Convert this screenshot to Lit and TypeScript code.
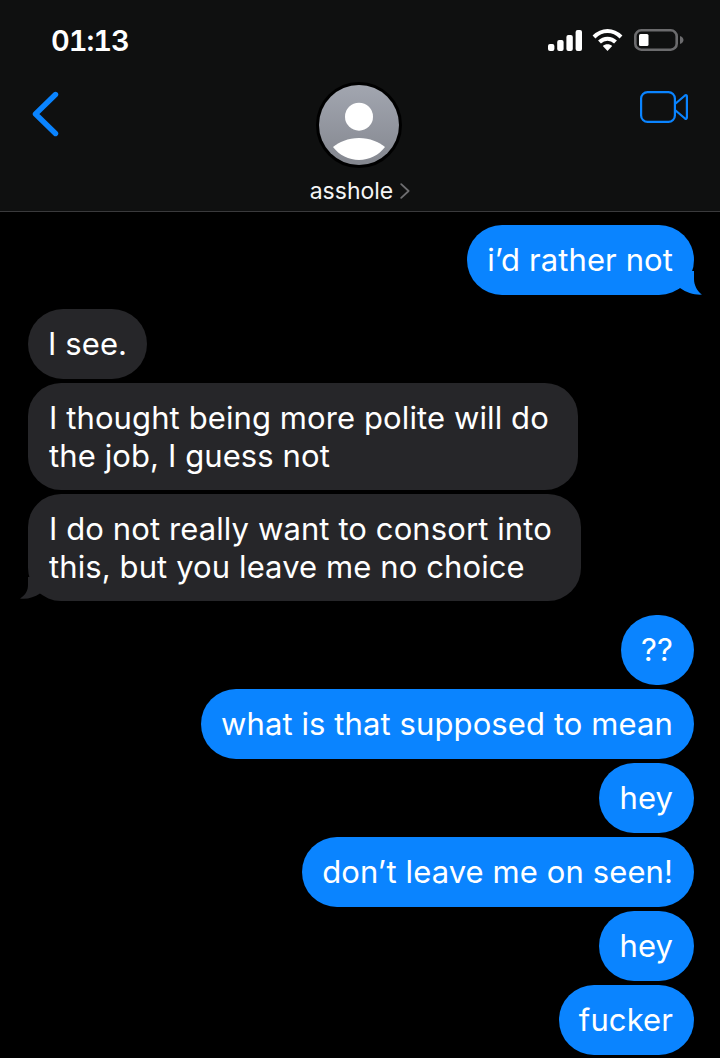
import { LitElement, html, css, svg } from "lit";
import { customElement } from "lit/decorators.js";

type Msg = { side: "in" | "out"; lines: string[]; tail?: boolean; gap: number };

const MESSAGES: Msg[] = [
  { side: "out", lines: ["i’d rather not"], tail: true, gap: 0 },
  { side: "in", lines: ["I see."], gap: 14 },
  { side: "in", lines: ["I thought being more polite will do", "the job, I guess not"], gap: 4 },
  { side: "in", lines: ["I do not really want to consort into", "this, but you leave me no choice"], tail: true, gap: 4 },
  { side: "out", lines: ["??"], gap: 14 },
  { side: "out", lines: ["what is that supposed to mean"], gap: 4 },
  { side: "out", lines: ["hey"], gap: 4 },
  { side: "out", lines: ["don’t leave me on seen!"], gap: 4 },
  { side: "out", lines: ["hey"], gap: 4 },
  { side: "out", lines: ["fucker"], gap: 4 },
];

const tailOut = svg`<svg class="tail tail-out" width="30" height="24" viewBox="0 0 30 24"><path d="M0 0H21V8C21 14 24 20 29 23.6C21 24 14 22 7 17C5 18 2 19 0 19Z" fill="#0a84ff"/></svg>`;
const tailIn = svg`<svg class="tail tail-in" width="30" height="24" viewBox="0 0 30 24"><path d="M30 0H8V8C8 13 6 18 0 21.5C7 22.5 14 20.5 20 16.5C23 18 27 19 30 19Z" fill="#262629"/></svg>`;

@customElement("app-root")
export class AppRoot extends LitElement {
  static styles = css`
    :host {
      display: block;
      width: 720px;
      height: 1058px;
      overflow: hidden;
      background: #000;
      color: #fff;
      font-family: Inter, "Noto Sans", sans-serif;
    }

    header {
      box-sizing: border-box;
      height: 212px;
      background: #0f1010;
      border-bottom: 1px solid #3a3a3c;
      display: flex;
      flex-direction: column;
    }

    .status {
      display: flex;
      align-items: center;
      justify-content: space-between;
      padding: 29px 36px 0 51px;
      height: 22px;
    }

    .time {
      padding-top: 2px;
      font-size: 29px;
      font-weight: 600;
      line-height: 22px;
      letter-spacing: -1px;
      font-feature-settings: "tnum";
    }

    .status-icons {
      display: flex;
      align-items: center;
      gap: 10px;
    }

    .status-icons svg {
      display: block;
    }

    .status-icons .battery {
      margin-left: 1px;
    }

    .nav {
      display: grid;
      grid-template-columns: 1fr auto 1fr;
      padding: 31px 32px 0;
    }

    .nav .back {
      margin-top: 9px;
    }

    .nav .video {
      justify-self: end;
      margin-top: 9px;
    }

    .contact {
      display: flex;
      flex-direction: column;
      align-items: center;
      margin-right: 2px;
    }

    .avatar {
      width: 80px;
      height: 80px;
      border-radius: 50%;
      border: 3px solid #000;
      overflow: hidden;
      display: block;
    }

    .name {
      display: flex;
      align-items: center;
      gap: 7px;
      margin: 9px 0 0 2px;
      font-size: 23px;
      line-height: 28px;
      color: #f5f5f5;
    }

    main {
      display: flex;
      flex-direction: column;
      padding: 13px 26px 0 28px;
    }

    .row {
      display: flex;
    }

    .row.out {
      justify-content: flex-end;
    }

    .bubble {
      position: relative;
      box-sizing: border-box;
      min-height: 70px;
      padding: 16px 21px 15px 20px;
      border-radius: 35px;
      font-size: 31px;
      line-height: 38px;
      letter-spacing: 0.1px;
      white-space: nowrap;
    }

    .row.out .bubble {
      background: #0a84ff;
    }

    .row.in .bubble {
      background: #262629;
      padding-right: 20px;
    }

    .row.in .bubble.multi {
      padding-left: 21px;
      padding-right: 29px;
      border-radius: 33px;
    }

    .tail {
      position: absolute;
      bottom: 0;
      display: block;
    }

    .tail-out {
      right: -9px;
    }

    .tail-in {
      left: -8px;
    }
  `;

  private signal() {
    return html`<svg width="34" height="21" viewBox="0 0 34 21" fill="#fff">
      <rect x="0" y="14" width="6.4" height="7" rx="2" />
      <rect x="9.2" y="10" width="6.4" height="11" rx="2" />
      <rect x="18.4" y="5" width="6.4" height="16" rx="2" />
      <rect x="27.6" y="0" width="6.4" height="21" rx="2" />
    </svg>`;
  }

  private wifi() {
    return html`<svg width="31" height="22" viewBox="0 0 31 22" fill="none" stroke="#fff" stroke-width="4">
      <path d="M2 8C10 0 21 0 29 8" />
      <path d="M7.5 13C12 8.5 19 8.5 23.5 13" />
      <path d="M15.5 22L10.8 17C13 14.6 18 14.6 20.2 17Z" fill="#fff" stroke="none" />
    </svg>`;
  }

  private battery() {
    return html`<svg class="battery" width="50" height="22" viewBox="0 0 50 22">
      <rect x="1.3" y="1.3" width="41.4" height="19.4" rx="6" fill="none" stroke="#6b6b6d" stroke-width="2.6" />
      <rect x="5" y="5" width="9.5" height="12" rx="1.5" fill="#fff" />
      <path d="M46 7C48.5 8 49.5 9.5 49.5 11C49.5 12.5 48.5 14 46 15Z" fill="#6b6b6d" />
    </svg>`;
  }

  private avatar() {
    return html`<svg class="avatar" viewBox="0 0 80 80">
      <defs>
        <linearGradient id="face" x1="0" y1="0" x2="0" y2="1">
          <stop offset="0" stop-color="#a2a6b0" />
          <stop offset="1" stop-color="#84878f" />
        </linearGradient>
      </defs>
      <rect width="80" height="80" fill="url(#face)" />
      <circle cx="40" cy="31.7" r="14" fill="#fff" />
      <path d="M14 62C20 57 29 53 40 53C51 53 60 57 66 62C60 70 50 75 40 75C30 75 20 70 14 62Z" fill="#fff" />
    </svg>`;
  }

  render() {
    return html`
      <header>
        <div class="status">
          <span class="time">01:13</span>
          <div class="status-icons">${this.signal()} ${this.wifi()} ${this.battery()}</div>
        </div>
        <div class="nav">
          <svg class="back" width="28" height="46" viewBox="0 0 28 46" fill="none" stroke="#0a84ff" stroke-width="5.4" stroke-linecap="round" stroke-linejoin="round">
            <path d="M23.5 3.5L3.5 23L23.5 42.5" />
          </svg>
          <div class="contact">
            ${this.avatar()}
            <div class="name">
              <span>asshole</span>
              <svg width="10" height="16" viewBox="0 0 10 16" fill="none" stroke="#6e6e70" stroke-width="1.8" stroke-linecap="round" stroke-linejoin="round">
                <path d="M1.2 1.2L8.6 8L1.2 14.8" />
              </svg>
            </div>
          </div>
          <svg class="video" width="48" height="32" viewBox="0 0 48 32" fill="none" stroke="#0a84ff" stroke-width="2.2" stroke-linejoin="round">
            <rect x="1.1" y="1.1" width="33.8" height="29.8" rx="6.5" />
            <path d="M35 13L45 4.5C46 3.8 46.9 4.4 46.9 5.5V26.5C46.9 27.6 46 28.2 45 27.5L35 19" />
          </svg>
        </div>
      </header>
      <main>
        ${MESSAGES.map(
          (m) => html`
            <div class="row ${m.side}" style="margin-top: ${m.gap}px">
              <div class="bubble ${m.lines.length > 1 ? "multi" : ""}">
                ${m.tail ? (m.side === "out" ? tailOut : tailIn) : ""}
                ${m.lines.map((l) => html`<div>${l}</div>`)}
              </div>
            </div>
          `,
        )}
      </main>
    `;
  }
}
